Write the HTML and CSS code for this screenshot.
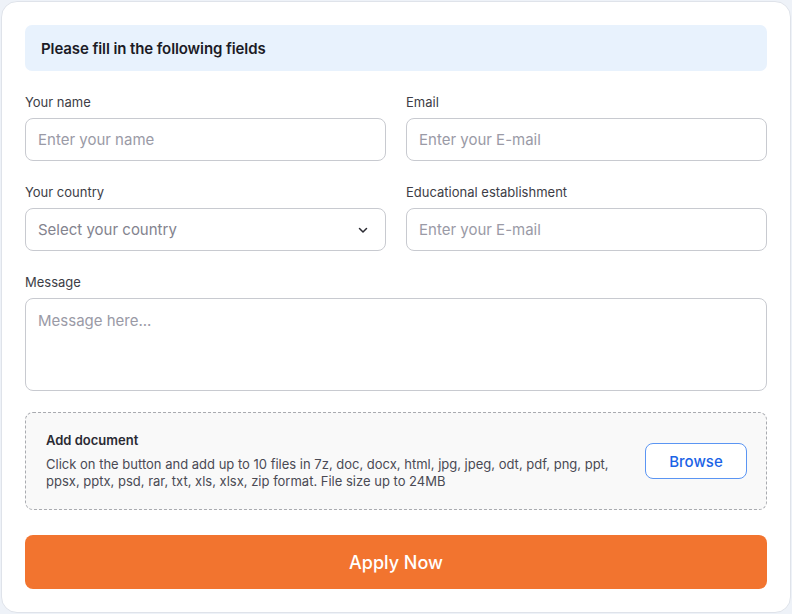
FILE: index.html
```html
<!DOCTYPE html>
<html lang="en">
<head>
<meta charset="utf-8">
<title>Application form</title>
<link rel="stylesheet" href="styles.css">
</head>
<body>
<form class="card">
  <div class="notice">Please fill in the following fields</div>
  <div class="grid">
    <label class="field">
      <span class="label">Your name</span>
      <input class="control" type="text" placeholder="Enter your name">
    </label>
    <label class="field">
      <span class="label">Email</span>
      <input class="control" type="text" placeholder="Enter your E-mail">
    </label>
    <label class="field">
      <span class="label">Your country</span>
      <span class="control select">
        <span class="select-text">Select your country</span>
        <svg class="chevron" width="12" height="12" viewBox="0 0 12 12"><path d="M2.5 4.5 6 8l3.5-3.5" fill="none" stroke="#2b2b33" stroke-width="1.5" stroke-linecap="round" stroke-linejoin="round"/></svg>
      </span>
    </label>
    <label class="field">
      <span class="label">Educational establishment</span>
      <input class="control" type="text" placeholder="Enter your E-mail">
    </label>
    <label class="field wide">
      <span class="label">Message</span>
      <textarea class="control area" placeholder="Message here..."></textarea>
    </label>
  </div>
  <div class="upload">
    <div class="upload-text">
      <div class="upload-title">Add document</div>
      <p class="upload-desc">Click on the button and add up to 10 files in 7z, doc, docx, html, jpg, jpeg, odt, pdf, png, ppt, ppsx, pptx, psd, rar, txt, xls, xlsx, zip format. File size up to 24MB</p>
    </div>
    <button class="browse" type="button">Browse</button>
  </div>
  <button class="apply" type="button">Apply Now</button>
</form>
</body>
</html>
```

FILE: styles.css
```css
* { box-sizing: border-box; }
html, body { margin: 0; padding: 0; }
body {
  background: #eef2f8;
  font-family: Inter, "Noto Sans", "Liberation Sans", sans-serif;
  color: #2a2a33;
}
.card {
  margin: 1px;
  width: 790px;
  height: 612px;
  background: #fff;
  border: 1px solid #dfe3ea;
  border-radius: 16px;
  padding: 23px 23px 0;
  display: flex;
  flex-direction: column;
}
.notice {
  height: 46px;
  background: #e8f2fd;
  border-radius: 7px;
  padding: 0 16px;
  display: flex;
  align-items: center;
  font-size: 15px;
  font-weight: 600;
  color: #1b1b26;
  letter-spacing: -0.1px;
}
.grid {
  margin-top: 23px;
  display: grid;
  grid-template-columns: 1fr 1fr;
  column-gap: 20px;
  row-gap: 23px;
}
.field {
  display: flex;
  flex-direction: column;
  gap: 8px;
}
.wide { grid-column: 1 / 3; }
.label {
  font-size: 13px;
  line-height: 16px;
  color: #3d3d46;
}
.control {
  height: 43px;
  border: 1px solid #c8cad0;
  border-radius: 8px;
  background: #fff;
  padding: 0 12px;
  font-family: inherit;
  font-size: 15px;
  color: #2a2a33;
  outline: none;
}
.control::placeholder { color: #9a9aa6; }
.select {
  display: flex;
  align-items: center;
  justify-content: space-between;
  padding-right: 16px;
}
.select-text { color: #83838e; }
.chevron { display: block; }
.area {
  height: 93px;
  padding-top: 12px;
  resize: none;
  line-height: 20px;
}
.upload {
  margin-top: 21px;
  height: 98px;
  background: #f9f9f9;
  border: 1px dashed #a9abb0;
  border-radius: 8px;
  padding: 0 19px 0 20px;
  display: flex;
  align-items: center;
  justify-content: space-between;
  gap: 24px;
}
.upload-text { width: 580px; }
.upload-title {
  font-size: 13px;
  font-weight: 600;
  color: #2a2a33;
  line-height: 16px;
}
.upload-desc {
  margin: 8px 0 0;
  font-size: 13px;
  line-height: 17px;
  color: #4a4a54;
}
.browse {
  width: 102px;
  height: 36px;
  flex: none;
  border: 1.5px solid #5b95f3;
  border-radius: 8px;
  background: #fff;
  font-family: inherit;
  font-size: 15px;
  font-weight: 500;
  color: #1b63e6;
}
.apply {
  margin-top: 25px;
  height: 54px;
  border: 0;
  border-radius: 8px;
  background: #f2742f;
  color: #fff;
  font-family: inherit;
  font-size: 18px;
  font-weight: 500;
}
```
